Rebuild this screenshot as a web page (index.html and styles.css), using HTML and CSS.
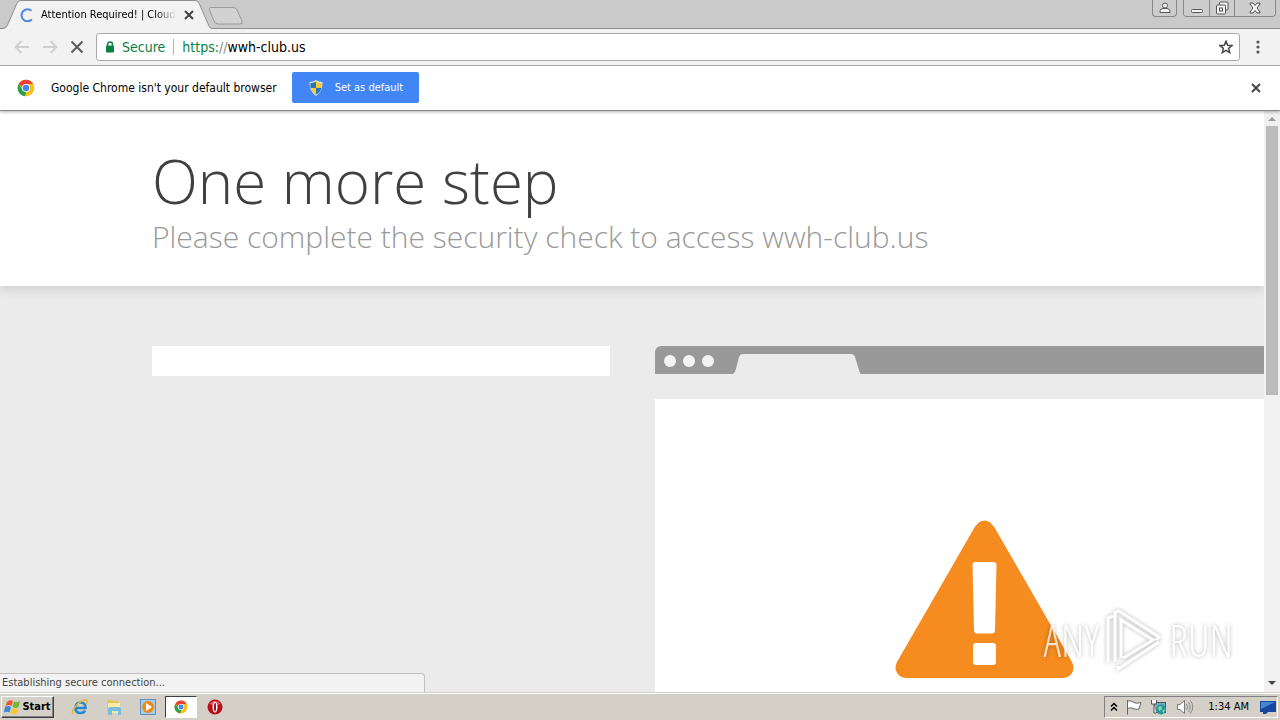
FILE: index.html
```html
<!DOCTYPE html>
<html lang="en">
<head>
  <meta charset="UTF-8" />
  <meta name="viewport" content="width=device-width, initial-scale=1.0" />
  <title>Attention Required! | Cloudflare</title>
  <link rel="stylesheet" href="styles.css">
</head>
<body>
  <div class="browser">
    <header class="tab-strip">
      <div class="tab">
        <svg class="tab-shape" width="212" height="29" viewBox="0 0 212 29"><path d="M0 28.500H3Q6 28.500 7.500 25L17 3Q18 .5 21 .5H195Q198 .5 199 3L209 26Q210 28.500 212 28.500V29H0Z" fill="#f2f2f2"/><path d="M0 28.500H3Q6 28.500 7.500 25L17 3Q18 .5 21 .5H195Q198 .5 199 3L209 26Q210 28.500 212 28.500" fill="none" stroke="#8e8e8e"/></svg>
        <svg class="spinner" width="14" height="14" viewBox="0 0 14 14"><path d="M11.500 2.800A6 6 0 1 0 11.800 11.500" fill="none" stroke="#4e83e8" stroke-width="2"/></svg>
        <span class="tab-title">Attention Required! | Cloudflare</span>
        <button class="icon-button" aria-label="Close tab"><svg width="10" height="10" viewBox="0 0 10 10"><path d="M1 1L9 9M9 1L1 9" stroke="#444" stroke-width="2"/></svg></button>
      </div>
      <button class="icon-button new-tab" aria-label="New tab"><svg width="36" height="18" viewBox="0 0 36 18"><path d="M3 .5H25Q28 .5 29 3L34 14Q35 17 32 17H10Q7 17 6 14L1.500 3Q.5 .5 3 .5Z" fill="#d2d2d2" stroke="#9a9a9a"/></svg></button>
      <div class="window-buttons">
        <button class="user" aria-label="User"><svg width="12" height="12" viewBox="0 0 12 12"><circle cx="6" cy="3.500" r="2.500"/><path d="M1 10.500V9Q1 7 4 6.500H8Q11 7 11 9V10.500Z"/></svg></button>
        <div class="window-group">
          <button aria-label="Minimize"><svg width="14" height="14" viewBox="0 0 14 14"><rect x="1.500" y="8.500" width="11" height="3" rx="1"/></svg></button>
          <button aria-label="Restore"><svg width="14" height="14" viewBox="0 0 14 14"><path d="M4.500 3.500V2Q4.500 1 5.500 1H12Q13 1 13 2V8Q13 9 12 9H10.500"/><rect x="1.500" y="4" width="9" height="9" rx="1"/><rect x="4.500" y="7" width="3" height="3"/></svg></button>
          <button class="wide" aria-label="Close"><svg width="14" height="12" viewBox="0 0 14 12"><path d="M2 1H5L7 3.500L9 1H12V2L9 6L12 10V11H9L7 8.500L5 11H2V10L5 6L2 2Z"/></svg></button>
        </div>
      </div>
    </header>

    <nav class="toolbar">
      <button class="icon-button" aria-label="Back" disabled><svg width="16" height="14" viewBox="0 0 16 14"><path d="M15 7H2M7.500 1L1.500 7L7.500 13" fill="none" stroke="#d0d0d0" stroke-width="2"/></svg></button>
      <button class="icon-button" aria-label="Forward" disabled><svg width="16" height="14" viewBox="0 0 16 14"><path d="M1 7H14M8.500 1L14.500 7L8.500 13" fill="none" stroke="#d0d0d0" stroke-width="2"/></svg></button>
      <button class="icon-button" aria-label="Stop"><svg width="14" height="14" viewBox="0 0 14 14"><path d="M1.500 1.500L12.500 12.500M12.500 1.500L1.500 12.500" stroke="#5a5a5a" stroke-width="2"/></svg></button>
      <div class="address-bar">
        <svg width="10" height="12" viewBox="0 0 10 12"><path d="M2.500 5V3.500a2.500 2.500 0 0 1 5 0V5" fill="none" stroke="#0b8043" stroke-width="1.500"/><rect x="1" y="4.500" width="8" height="7" rx="1" fill="#0b8043"/></svg>
        <span class="secure">Secure</span>
        <span class="url"><span class="scheme">https:</span><span class="slashes">//</span>wwh-club.us</span>
        <button class="icon-button" aria-label="Bookmark"><svg width="14" height="14" viewBox="0 0 14 14"><path d="M7 1.200L8.700 5.200L13 5.500L9.700 8.300L10.700 12.600L7 10.300L3.300 12.600L4.300 8.300L1 5.500L5.300 5.200Z" fill="none" stroke="#444" stroke-width="1.500"/></svg></button>
      </div>
      <button class="icon-button menu" aria-label="Menu"><svg width="4" height="14" viewBox="0 0 4 14"><g fill="#555"><circle cx="2" cy="2" r="1.600"/><circle cx="2" cy="7" r="1.600"/><circle cx="2" cy="12" r="1.600"/></g></svg></button>
    </nav>

    <div class="infobar">
      <svg width="18" height="18" viewBox="0 0 18 18"><circle cx="9" cy="9" r="8.300" fill="#fbc116"/><path d="M1.800 4.800A8.300 8.300 0 0 1 16.200 5H9L5.400 8.500Z" fill="#ea4335"/><path d="M1.800 4.800L5.500 11L9 13L8 17.300A8.300 8.300 0 0 1 1.800 4.800Z" fill="#2da04e"/><circle cx="9" cy="9" r="4" fill="#fff"/><circle cx="9" cy="9" r="3.200" fill="#4285f4"/></svg>
      <span class="infobar-text">Google Chrome isn't your default browser</span>
      <button class="set-default">
        <svg width="14" height="16" viewBox="0 0 14 16"><path d="M7 0Q10 2 13.500 2Q14 11 7 16Q0 11 .5 2Q4 2 7 0Z" fill="#dfe6d4"/><path d="M7 1.500V8H1.600Q1.200 6 1.500 3Q4.500 3 7 1.500ZM7 8H12.400Q11.500 12 7 14.700Z" fill="#2776b9"/><path d="M7 1.500Q9.500 3 12.500 3Q12.800 6 12.400 8H7ZM1.600 8H7V14.700Q2.500 12 1.600 8Z" fill="#f6ca35"/></svg>
        Set as default
      </button>
      <button class="icon-button dismiss" aria-label="Dismiss"><svg width="10" height="10" viewBox="0 0 10 10"><path d="M1 1L9 9M9 1L1 9" stroke="#444" stroke-width="2"/></svg></button>
    </div>

    <div class="viewport">
      <main class="page">
        <div class="page-header">
          <div class="wrapper">
            <h1>One more step</h1>
            <h2>Please complete the security check to access wwh-club.us</h2>
          </div>
        </div>
        <div class="wrapper columns">
          <div class="captcha"></div>
          <div class="mock-browser">
            <div class="mock-bar">
              <i></i><i></i><i></i>
              <svg width="128" height="20" viewBox="0 0 128 20"><path d="M0 20Q2 19 3 15L6 3Q7 0 10 0H118Q121 0 122 3L126 16Q127 20 128 20Z" fill="#ebebeb"/></svg>
            </div>
            <div class="mock-body">
              <svg width="180" height="160" viewBox="0 0 180 160"><path d="M79.500 7.500Q84 .5 89.500 .5Q95 .5 99.500 7.500L177 142Q180 148 177 153Q174 158 167 158H12Q5 158 2 153Q-1 148 2 142Z" fill="#f68b1f"/><path d="M80 42H98.500Q101.500 42 101.500 45L100 110Q100 113.500 97 113.500H82Q79 113.500 79 110L77.500 45Q77.500 42 80 42Z" fill="#fff"/><rect x="78" y="123" width="23" height="22" rx="3" fill="#fff"/></svg>
            </div>
          </div>
        </div>
      </main>
      <div class="scrollbar">
        <svg width="16" height="15" viewBox="0 0 16 15"><path d="M4 10L8 6L12 10Z" fill="#999"/></svg>
        <div class="thumb"></div>
        <svg width="16" height="16" viewBox="0 0 16 16"><path d="M4 5L8 9L12 5Z" fill="#444"/></svg>
      </div>
      <div class="status">Establishing secure connection...</div>
      <div class="watermark">
        <span>ANY</span>
        <svg width="58" height="64" viewBox="0 0 58 64" fill="none" stroke="#fff" stroke-width="3"><path d="M3 55V10L8 8M10 54V4L14 3L54 29L51 32M16 50V12L48 32L18 50M13 58V61L54 34"/></svg>
        <span>RUN</span>
      </div>
    </div>

    <footer class="taskbar">
      <button class="start">
        <svg width="17" height="16" viewBox="0 0 17 16"><path d="M3 3Q6 0 9 2L7.500 7Q5 5 1.500 7Z" fill="#e8592b"/><path d="M10 2.500Q13 4 16 2L14.500 8Q12 10 8.500 8Z" fill="#75b637"/><path d="M1 8Q4 6 7 8L5.500 13.500Q3 12 0 13.500Z" fill="#3989d2"/><path d="M8 9Q11 11 14 9L12.500 14.500Q9 16 6.500 14Z" fill="#f8c92d"/></svg>
        Start
      </button>
      <div class="quick-launch">
        <button aria-label="Internet Explorer"><svg width="18" height="18" viewBox="0 0 18 18"><path d="M5 10H14.500Q14.500 4.500 9.500 4.500Q4.500 4.500 4.500 10Q4.500 15 9.500 15Q13 15 14 12.500" fill="none" stroke="#2589cf" stroke-width="2.600"/><path d="M2 16Q0 13 5 8Q11 1 16 2Q17 3 15 6" fill="none" stroke="#e1b73c" stroke-width="1.500"/></svg></button>
        <button aria-label="Explorer"><svg width="18" height="18" viewBox="0 0 18 18"><path d="M2 2H7L8 3H14V14H2Z" fill="#e5c65a"/><path d="M3 5H15V15H3Z" fill="#fbeaa1"/><path d="M3 17V11Q3 9 5 9H14Q16 9 16 11V17H13V13H7V17Z" fill="#77bde2"/></svg></button>
        <button aria-label="Media Player"><svg width="18" height="18" viewBox="0 0 18 18"><rect x="1.500" y="1.500" width="15" height="15" fill="#a9cdef" stroke="#5993c6"/><circle cx="9" cy="9" r="6" fill="#f28a18"/><path d="M7 5L13 9L7 13Z" fill="#fff"/></svg></button>
        <button class="active" aria-label="Chrome"><svg width="14" height="14" viewBox="0 0 18 18"><circle cx="9" cy="9" r="8.300" fill="#fbc116"/><path d="M1.800 4.800A8.300 8.300 0 0 1 16.200 5H9L5.400 8.500Z" fill="#ea4335"/><path d="M1.800 4.800L5.500 11L9 13L8 17.300A8.300 8.300 0 0 1 1.800 4.800Z" fill="#2da04e"/><circle cx="9" cy="9" r="4" fill="#fff"/><circle cx="9" cy="9" r="3.200" fill="#4285f4"/></svg></button>
        <button aria-label="Opera"><svg width="18" height="18" viewBox="0 0 18 18"><circle cx="9" cy="9" r="7.500" fill="#b60f18"/><path d="M3 6Q9 0 15 6Q9 8 3 6Z" fill="#df5d61"/><ellipse cx="9" cy="9" rx="2.500" ry="5.500" fill="#fff"/><ellipse cx="9" cy="9" rx="1" ry="4.500" fill="#90111b"/></svg></button>
      </div>
      <div class="tray">
        <svg width="8" height="10" viewBox="0 0 8 10"><path d="M1 4.500L4 1.500L7 4.500M1 8.500L4 5.500L7 8.500" fill="none" stroke="#000" stroke-width="1.500"/></svg>
        <svg width="16" height="16" viewBox="0 0 16 16"><path d="M1.500 1V15.500M2 2Q5 1 8 3.500Q11 5 15 3.500L13 10Q10 11 7 9.500Q5 8 2 9.500" fill="#fff" stroke="#666"/></svg>
        <svg width="18" height="16" viewBox="0 0 18 16"><rect x="4.500" y="3.500" width="11" height="10" fill="#6dafc5" stroke="#555"/><circle cx="11" cy="10.500" r="5" fill="#26999b"/><path d="M8 8L11 7L12 10L9 12ZM12 12L15 10L14 14Z" fill="#8bd5b1"/><path d="M1.500 1V5H6.500V1M4 5V14H6" fill="#fff" stroke="#555"/></svg>
        <svg width="18" height="16" viewBox="0 0 18 16"><path d="M1.500 5.500H4L8.500 1.500V14.500L4 10.500H1.500Z" fill="#fff" stroke="#777"/><path d="M10.500 5Q12.500 8 10.500 11M12.500 3Q16 8 12.500 13M14.500 1.500Q19 8 14.500 14.500" fill="none" stroke="#888"/></svg>
        <time class="clock">1:34 AM</time>
        <svg width="16" height="14" viewBox="0 0 16 14"><path d="M0 1H16V12H8L6 14H3V12H0Z" fill="#16499e"/><path d="M1 2H15L1 9Z" fill="#4a87d3"/></svg>
      </div>
    </footer>
  </div>
</body>
</html>
```
FILE: styles.css
```css
* {
  box-sizing: border-box;
}

body {
  margin: 0;
  font-family: 'DejaVu Sans Condensed', 'DejaVu Sans', sans-serif;
  font-size: 11px;
  color: #000;
}

button {
  font: inherit;
  padding: 0;
  border: none;
  display: flex;
  align-items: center;
  justify-content: center;
}

svg {
  display: block;
  flex: none;
}

.browser {
  display: flex;
  flex-direction: column;
  height: 100vh;
  overflow: hidden;
}

.icon-button {
  background: none;
}

/* tabs */
.tab-strip {
  display: flex;
  flex: none;
  height: 29px;
  background: #cacaca;
  border-bottom: 1px solid #8e8e8e;
}

.tab {
  position: relative;
  display: flex;
  align-items: center;
  width: 212px;
  height: 29px;
  padding: 0 18px 0 20px;
}

.tab > * {
  position: relative;
}

.tab .tab-shape {
  position: absolute;
  top: 0;
  left: 0;
}

.tab-title {
  flex: 1;
  margin: 0 8px 0 7px;
  overflow: hidden;
  white-space: nowrap;
  -webkit-mask-image: linear-gradient(to right, #000 85%, transparent);
  mask-image: linear-gradient(to right, #000 85%, transparent);
}

.new-tab {
  align-self: center;
  margin-bottom: -3px;
  margin-left: -4px;
}

.window-buttons {
  display: flex;
  gap: 6px;
  height: 17px;
  margin-left: auto;
  margin-right: 4px;
}

.window-buttons svg {
  fill: #f5f5f5;
  stroke: #555;
}

.window-buttons button {
  width: 25px;
  height: 16px;
  background: #cdcdcd;
}

.window-buttons .user,
.window-group {
  border: 1px solid #888;
  border-top: none;
  border-radius: 0 0 4px 4px;
  height: 17px;
}

.window-group {
  display: flex;
  overflow: hidden;
}

.window-group button + button {
  border-left: 1px solid #888;
}

.window-buttons .wide {
  width: 41px;
}

/* toolbar */
.toolbar {
  display: flex;
  align-items: center;
  flex: none;
  gap: 12px;
  height: 37px;
  padding: 0 20px 0 14px;
  background: #f2f2f2;
  border-bottom: 1px solid #b0b0b0;
}

.address-bar {
  display: flex;
  align-items: center;
  flex: 1;
  height: 28px;
  padding: 0 6px 0 8px;
  background: #fff;
  border: 1px solid #aaa;
  border-radius: 3px;
  font-size: 14px;
}

.secure {
  margin-left: 7px;
  padding-right: 8px;
  border-right: 1px solid #b5b5b5;
  color: #0b8043;
  line-height: 16px;
}

.url {
  flex: 1;
  margin-left: 8px;
}

.scheme {
  color: #0b8043;
}

.slashes {
  color: #888;
}

.menu {
  margin-left: 4px;
}

/* default browser bar */
.infobar {
  position: relative;
  z-index: 1;
  display: flex;
  align-items: center;
  flex: none;
  height: 45px;
  padding: 0 19px 0 17px;
  background: #fff;
  border-bottom: 1px solid #888;
  box-shadow: 0 1px 3px rgba(0, 0, 0, 0.3);
}

.infobar-text {
  margin: 0 15px 0 16px;
  font-size: 12px;
}

.set-default {
  gap: 12px;
  height: 31px;
  margin-bottom: 1px;
  padding: 0 16px 0 17px;
  background: #4285f4;
  color: #fff;
  border-radius: 2px;
}

.dismiss {
  margin-left: auto;
}

/* page */
.viewport {
  position: relative;
  display: flex;
  flex: 1;
  min-height: 0;
}

.page {
  flex: 1;
  min-width: 0;
  overflow: hidden;
  background: #ebebeb;
  font-family: 'Open Sans', sans-serif;
}

.page-header {
  padding: 31px 0 33px;
  background: #fff;
  box-shadow: 0 2px 12px rgba(0, 0, 0, 0.15);
}

.wrapper {
  width: 90%;
  max-width: 960px;
  margin: 0 auto;
}

h1,
h2 {
  margin: 0;
  font-weight: 300;
}

h1 {
  font-size: 60px;
  line-height: 78px;
  color: #404040;
}

h2 {
  font-size: 30px;
  line-height: 33px;
  color: #999;
}

.columns {
  display: flex;
  align-items: flex-start;
  gap: 45px;
  padding-top: 60px;
}

.captcha {
  flex: 0 0 458px;
  height: 30px;
  background: #fff;
}

.mock-browser {
  flex: 0 0 659px;
}

.mock-bar {
  display: flex;
  align-items: center;
  gap: 7px;
  height: 28px;
  padding-left: 9px;
  background: #999;
  border-radius: 6px 0 0 0;
}

.mock-bar i {
  width: 12px;
  height: 12px;
  margin-top: 2px;
  background: #f3f3f3;
  border-radius: 50%;
}

.mock-bar svg {
  align-self: flex-end;
  margin-left: 12px;
}

.mock-body {
  display: flex;
  justify-content: center;
  height: 400px;
  margin-top: 25px;
  padding-top: 121px;
  background: #fff;
}

.scrollbar {
  display: flex;
  flex-direction: column;
  width: 16px;
  background: #f1f1f1;
}

.thumb {
  flex: 0 1 269px;
  margin: 0 2px auto;
  background: #bcbcbc;
}

.status {
  position: absolute;
  left: 0;
  bottom: 0;
  width: 425px;
  padding-left: 2px;
  background: #f2f2f2;
  border: 1px solid #c0c0c0;
  border-width: 1px 1px 0 0;
  border-radius: 0 4px 0 0;
  color: #444;
  line-height: 18px;
}

.watermark {
  position: absolute;
  right: 47px;
  bottom: 20px;
  display: flex;
  align-items: center;
  gap: 6px;
  color: #fff;
  font-family: 'Open Sans Condensed Light', 'Open Sans Condensed', 'Liberation Sans Narrow', sans-serif;
  font-weight: 300;
  font-size: 44px;
  line-height: 64px;
  opacity: 0.75;
  filter: drop-shadow(0 0 2px rgba(0, 0, 0, 0.4));
}

/* taskbar */
.taskbar {
  display: flex;
  align-items: center;
  flex: none;
  height: 28px;
  padding-right: 2px;
  background: #d4d0c8;
  border-top: 1px solid #d4d0c8;
  box-shadow: inset 0 1px #fff;
}

.start {
  gap: 1px;
  width: 53px;
  height: 22px;
  margin-left: 1px;
  background: #d4d0c8;
  border: 1px solid;
  border-color: #fff #404040 #404040 #fff;
  box-shadow: inset -1px -1px #808080;
  font-weight: bold;
}

.quick-launch {
  display: flex;
  gap: 1px;
  margin-left: 9px;
}

.quick-launch button {
  width: 33px;
  height: 22px;
  background: none;
}

.quick-launch .active {
  width: 32px;
  background: #fff;
  border: 1px solid;
  border-color: #404040 #fff #fff #404040;
}

.tray {
  display: flex;
  align-items: center;
  gap: 8px;
  height: 22px;
  margin-left: auto;
  padding: 0 1px 0 5px;
  border: 1px solid;
  border-color: #808080 #fff #fff #808080;
}

.clock {
  margin: 0 3px 0 6px;
}
```
